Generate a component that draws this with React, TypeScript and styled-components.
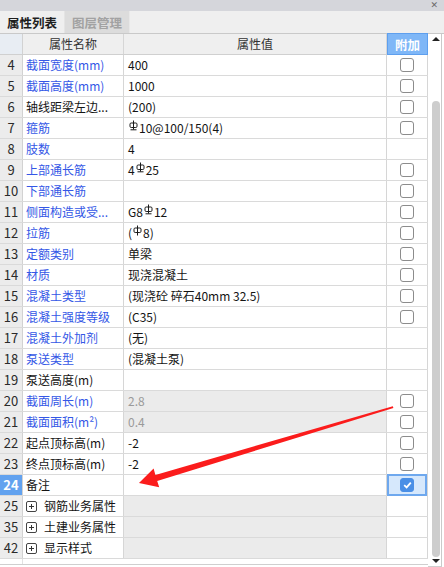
import React from 'react';
import styled, { createGlobalStyle } from 'styled-components';

const Global = createGlobalStyle`
  *, *::before, *::after { box-sizing: border-box; }
  html, body { margin: 0; padding: 0; background: #fff; }
  body { font-family: "Noto Sans CJK SC", "Noto Sans", sans-serif; }
`;

const Panel = styled.div`
  position: relative;
  width: 444px;
  height: 567px;
  overflow: hidden;
  background: #fff;
  display: flex;
  flex-direction: column;
  font-family: "Noto Sans CJK SC", "Noto Sans", sans-serif;
  color: #111;
`;

const TitleBar = styled.div`
  height: 11px;
  flex: none;
  background: #d5d6db;
  display: flex;
  justify-content: flex-end;
  align-items: center;
  padding-right: 6px;
`;

const Close = styled.span`
  font-family: "DejaVu Sans", sans-serif;
  font-size: 9px;
  line-height: 11px;
  font-weight: 700;
  color: #6a6a6a;
`;

const TabBar = styled.div`
  height: 22px;
  flex: none;
  background: #efefef;
  display: flex;
`;

const Tab = styled.div<{ $active?: boolean }>`
  width: 65px;
  display: flex;
  align-items: center;
  justify-content: center;
  font-size: 12.5px;
  font-weight: 700;
  color: ${(p) => (p.$active ? '#1e1e1e' : '#a2a2a2')};
  background: ${(p) => (p.$active ? '#efefef' : '#dcdcdc')};
  border-right: 1px solid ${(p) => (p.$active ? '#e4e4e4' : '#e8e8e8')};
`;

const Body = styled.div`
  flex: 1;
  display: flex;
  border-top: 1px solid #c9c9c9;
`;

const Grid = styled.div`
  width: 428px;
  display: flex;
  flex-direction: column;
`;

const Row = styled.div<{ $header?: boolean }>`
  display: flex;
  height: 21px;
  flex: none;
  border-bottom: 1px solid ${(p) => (p.$header ? '#d0d0d0' : '#dadada')};
  background: ${(p) => (p.$header ? '#efefef' : '#fff')};
`;

const NumCell = styled.div<{ $selected?: boolean; $header?: boolean }>`
  width: 23px;
  flex: none;
  border-right: 1px solid #d2d2d2;
  background: ${(p) => (p.$selected ? '#62a2ef' : p.$header ? '#e8edf3' : '#ececec')};
  color: ${(p) => (p.$selected ? '#fff' : '#2a2a2a')};
  font-weight: ${(p) => (p.$selected ? 700 : 400)};
  font-size: 13px;
  line-height: 20px;
  text-align: center;
`;

const NameCell = styled.div<{ $blue?: boolean; $header?: boolean }>`
  width: 101px;
  flex: none;
  border-right: 1px solid #d6d6d6;
  display: flex;
  align-items: center;
  justify-content: ${(p) => (p.$header ? 'center' : 'flex-start')};
  padding-left: ${(p) => (p.$header ? 0 : 3)}px;
  font-size: 12px;
  line-height: 20px;
  white-space: nowrap;
  overflow: hidden;
  color: ${(p) => (p.$header ? '#333' : p.$blue ? '#3457e6' : '#141414')};
`;

const ValueCell = styled.div<{ $grey?: boolean; $header?: boolean }>`
  width: 263px;
  flex: none;
  border-right: 1px solid #d6d6d6;
  display: flex;
  align-items: center;
  justify-content: ${(p) => (p.$header ? 'center' : 'flex-start')};
  padding-left: ${(p) => (p.$header ? 0 : 4)}px;
  font-size: 12px;
  line-height: 20px;
  white-space: nowrap;
  overflow: hidden;
  background: ${(p) => (p.$grey ? '#ebebeb' : 'transparent')};
  color: ${(p) => (p.$header ? '#333' : p.$grey ? '#9a9a9a' : '#141414')};
`;

const AttachCell = styled.div<{ $selected?: boolean }>`
  width: 41px;
  flex: none;
  border-right: 1px solid #d6d6d6;
  display: flex;
  align-items: center;
  justify-content: center;
  background: ${(p) => (p.$selected ? '#d6e8fc' : '#fff')};
  box-shadow: ${(p) => (p.$selected ? 'inset 0 0 0 2px #6ea8ee' : 'none')};
  margin-top: ${(p) => (p.$selected ? -1 : 0)}px;
  height: ${(p) => (p.$selected ? 22 : 20)}px;
`;

const AttachHead = styled.div`
  width: 41px;
  flex: none;
  margin: -1px 0 -1px 0;
  height: 22px;
  background: #7fb7f7;
  border: 1px solid #5e9fee;
  color: #fff;
  font-size: 12.5px;
  font-weight: 700;
  display: flex;
  align-items: center;
  justify-content: center;
`;

const Check = styled.span<{ $checked?: boolean }>`
  width: 14px;
  height: 14px;
  border-radius: 3px;
  border: 1px solid ${(p) => (p.$checked ? '#4a8fe6' : '#8c8c8c')};
  background: ${(p) => (p.$checked ? '#4a8fe6' : '#fff')};
  display: flex;
  align-items: center;
  justify-content: center;
`;

const PlusBox = styled.span`
  width: 11px;
  height: 11px;
  border: 1px solid #444;
  border-radius: 2px;
  position: relative;
  margin-right: 7px;
  flex: none;
  &::before, &::after {
    content: '';
    position: absolute;
    background: #333;
  }
  &::before { left: 2px; right: 2px; top: 4px; height: 1px; }
  &::after { top: 2px; bottom: 2px; left: 4px; width: 1px; }
`;

const Filler = styled.div`
  height: 6px;
  flex: none;
  border-bottom: 1px solid #cfcfcf;
  display: flex;
`;

const FillerNum = styled.div`
  width: 23px;
  border-right: 1px solid #e2e2e2;
`;

const ScrollCol = styled.div`
  width: 14px;
  flex: none;
  border-right: 1px solid #cacaca;
  border-bottom: 1px solid #cfcfcf;
  display: flex;
  flex-direction: column;
  align-items: center;
  padding-top: 3px;
  height: 533px;
`;

const Tri = styled.span<{ $down?: boolean }>`
  width: 0;
  height: 0;
  border-left: 4px solid transparent;
  border-right: 4px solid transparent;
  ${(p) => (p.$down ? 'border-top: 4px solid #222;' : 'border-bottom: 4px solid #222;')}
  margin-left: 3px;
`;

const Thumb = styled.div`
  width: 8px;
  height: 456px;
  margin: 60px 0 2px 3px;
  border-radius: 4px;
  background: #cdcdcd;
`;

const Sym = styled.svg`
  width: 9px;
  height: 11px;
  margin: 0 1px 0 1px;
  position: relative;
  top: -3px;
  flex: none;
`;

type Seg = string | { sym: 'A' | 'C' };

interface RowData {
  n: number;
  name: string;
  blue?: boolean;
  value?: Seg[];
  grey?: boolean;
  check?: boolean;
  checked?: boolean;
  selected?: boolean;
}

const C = { sym: 'C' as const };
const A = { sym: 'A' as const };

const rows: RowData[] = [
  { n: 4, name: '截面宽度(mm)', blue: true, value: ['400'], check: true },
  { n: 5, name: '截面高度(mm)', blue: true, value: ['1000'], check: true },
  { n: 6, name: '轴线距梁左边...', value: ['(200)'], check: true },
  { n: 7, name: '箍筋', blue: true, value: [C, '10@100/150(4)'], check: true },
  { n: 8, name: '肢数', blue: true, value: ['4'] },
  { n: 9, name: '上部通长筋', blue: true, value: ['4', C, '25'], check: true },
  { n: 10, name: '下部通长筋', blue: true, value: [], check: true },
  { n: 11, name: '侧面构造或受...', blue: true, value: ['G8', C, '12'], check: true },
  { n: 12, name: '拉筋', blue: true, value: ['(', A, '8)'], check: true },
  { n: 13, name: '定额类别', blue: true, value: ['单梁'], check: true },
  { n: 14, name: '材质', blue: true, value: ['现浇混凝土'], check: true },
  { n: 15, name: '混凝土类型', blue: true, value: ['(现浇砼 碎石40mm 32.5)'], check: true },
  { n: 16, name: '混凝土强度等级', blue: true, value: ['(C35)'], check: true },
  { n: 17, name: '混凝土外加剂', blue: true, value: ['(无)'] },
  { n: 18, name: '泵送类型', blue: true, value: ['(混凝土泵)'] },
  { n: 19, name: '泵送高度(m)', value: [] },
  { n: 20, name: '截面周长(m)', blue: true, value: ['2.8'], grey: true, check: true },
  { n: 21, name: '截面面积(m²)', blue: true, value: ['0.4'], grey: true, check: true },
  { n: 22, name: '起点顶标高(m)', value: ['-2'], check: true },
  { n: 23, name: '终点顶标高(m)', value: ['-2'], check: true },
  { n: 24, name: '备注', value: [], check: true, checked: true, selected: true },
];

const groups = [
  { n: 25, name: '钢筋业务属性' },
  { n: 35, name: '土建业务属性' },
  { n: 42, name: '显示样式' },
];

function RebarSym({ kind }: { kind: 'A' | 'C' }) {
  return (
    <Sym viewBox="0 0 9 11">
      <line x1="4.5" y1="0.5" x2="4.5" y2={kind === 'C' ? 9.5 : 10.5} stroke="#1a1a1a" strokeWidth="1" />
      <rect x="1" y="3" width="7" height="4.5" rx="1.2" fill="none" stroke="#1a1a1a" strokeWidth="1" />
      {kind === 'C' && <line x1="1.5" y1="9.8" x2="7.5" y2="9.8" stroke="#1a1a1a" strokeWidth="1" />}
    </Sym>
  );
}

function Value({ segs }: { segs: Seg[] }) {
  return (
    <>
      {segs.map((s, i) =>
        typeof s === 'string' ? <span key={i}>{s}</span> : <RebarSym key={i} kind={s.sym} />
      )}
    </>
  );
}

function CheckMark() {
  return (
    <svg width="9" height="8" viewBox="0 0 9 8">
      <path d="M1.2 4.2 L3.6 6.4 L7.8 1.6" fill="none" stroke="#fff" strokeWidth="1.8" />
    </svg>
  );
}

const ArrowLayer = styled.svg`
  position: absolute;
  left: 0;
  top: 0;
  width: 444px;
  height: 567px;
  pointer-events: none;
`;

export default function App() {
  return (
    <>
      <Global />
      <Panel>
        <TitleBar>
          <Close>✕</Close>
        </TitleBar>
        <TabBar>
          <Tab $active>属性列表</Tab>
          <Tab>图层管理</Tab>
        </TabBar>
        <Body>
          <Grid>
            <Row $header>
              <NumCell $header />
              <NameCell $header>属性名称</NameCell>
              <ValueCell $header>属性值</ValueCell>
              <AttachHead>附加</AttachHead>
            </Row>
            {rows.map((r) => (
              <Row key={r.n}>
                <NumCell $selected={r.selected}>{r.n}</NumCell>
                <NameCell $blue={r.blue}>{r.name}</NameCell>
                <ValueCell $grey={r.grey}>
                  <Value segs={r.value || []} />
                </ValueCell>
                <AttachCell $selected={r.selected}>
                  {r.check && <Check $checked={r.checked}>{r.checked && <CheckMark />}</Check>}
                </AttachCell>
              </Row>
            ))}
            {groups.map((g) => (
              <Row key={g.n}>
                <NumCell>{g.n}</NumCell>
                <NameCell>
                  <PlusBox />
                  {g.name}
                </NameCell>
                <ValueCell $grey />
                <AttachCell />
              </Row>
            ))}
            <Filler>
              <FillerNum />
            </Filler>
          </Grid>
          <ScrollCol>
            <Tri />
            <Thumb />
            <Tri $down />
          </ScrollCol>
        </Body>
        <ArrowLayer viewBox="0 0 444 567">
          <polygon
            points="139,483 153.6,468.6 155.4,474.9 392.8,406.2 393.4,408 157.2,480.9 159.2,487.2"
            fill="#fb1c1c"
          />
        </ArrowLayer>
      </Panel>
    </>
  );
}
